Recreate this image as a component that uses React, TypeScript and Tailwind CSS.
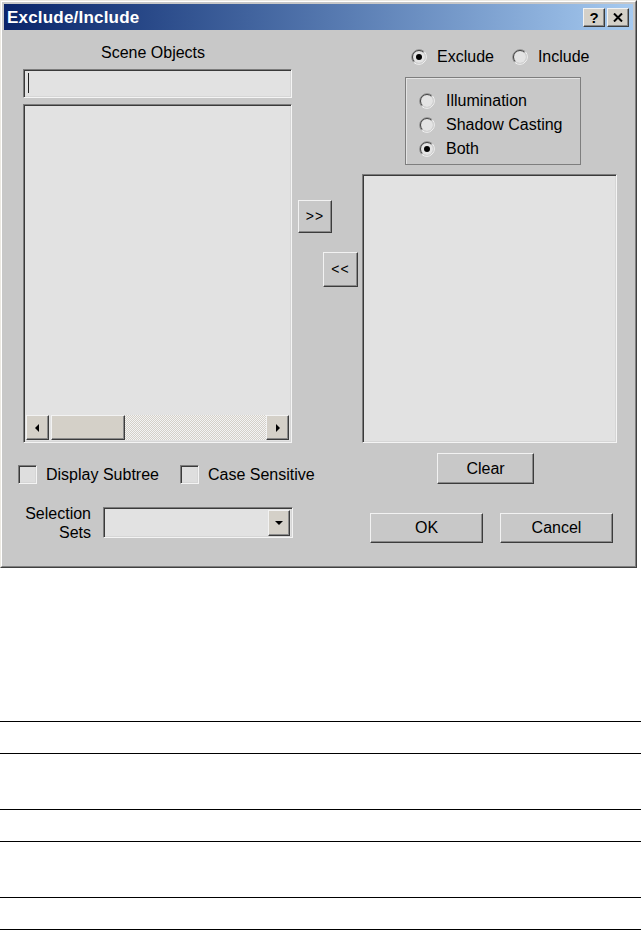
import React from 'react';

const sunken =
  'border border-t-[#7c7c7c] border-l-[#7c7c7c] border-b-[#f4f4f4] border-r-[#f4f4f4] shadow-[inset_1px_1px_0_#3a3a3a,inset_-1px_-1px_0_#d6d6d6]';
const raised =
  'border border-t-[#f2f2f2] border-l-[#f2f2f2] border-b-[#3c3c3c] border-r-[#3c3c3c] shadow-[inset_-1px_-1px_0_#8a8a8a]';

function Radio({ checked = false }: { checked?: boolean }) {
  return (
    <svg width="16" height="16" viewBox="0 0 16 16" className="shrink-0">
      <circle cx="8" cy="8" r="6" fill="#e4e4e4" />
      <path d="M2.7 13.3 A7.5 7.5 0 0 1 13.3 2.7" fill="none" stroke="#8a8a8a" strokeWidth="1" />
      <path d="M13.3 2.7 A7.5 7.5 0 0 1 2.7 13.3" fill="none" stroke="#f4f4f4" strokeWidth="1" />
      <path d="M3.4 12.6 A6.5 6.5 0 0 1 12.6 3.4" fill="none" stroke="#444444" strokeWidth="1" />
      <path d="M12.6 3.4 A6.5 6.5 0 0 1 3.4 12.6" fill="none" stroke="#d2d2d2" strokeWidth="1" />
      {checked && <circle cx="8" cy="8" r="3" fill="#000000" />}
    </svg>
  );
}

function Check({ label }: { label: string }) {
  return (
    <div className="flex items-center gap-[9px] shrink-0 whitespace-nowrap">
      <div className={`w-[19px] h-[19px] shrink-0 bg-[#dedede] ${sunken}`} />
      <span>{label}</span>
    </div>
  );
}

function Arrow({ dir }: { dir: 'left' | 'right' | 'down' }) {
  const d =
    dir === 'left' ? 'M6 1 L2 5 L6 9 Z' : dir === 'right' ? 'M3 1 L7 5 L3 9 Z' : 'M1 3 L9 3 L5 7 Z';
  return (
    <svg width="10" height="10" viewBox="0 0 10 10">
      <path d={d} fill="#000000" />
    </svg>
  );
}

function Button({ children, className }: { children: React.ReactNode; className: string }) {
  return (
    <div className={`flex items-center justify-center bg-[#c8c8c8] ${raised} ${className}`}>{children}</div>
  );
}

function Dialog() {
  return (
    <div className="w-[637px] h-[568px] border border-t-[#ece9e2] border-l-[#ece9e2] border-b-[#404040] border-r-[#404040]">
      <div className="h-full flex flex-col bg-[#c8c8c8] border border-t-[#ffffff] border-l-[#ffffff] border-b-[#808080] border-r-[#808080] p-[2px]">
        {/* Title bar */}
        <div className="h-[26px] flex items-center justify-between bg-linear-to-r from-[#0a246a] to-[#a6caf0] pl-[3px] pr-[4px]">
          <span className="text-white font-bold text-[17px] leading-none tracking-[0.2px]">Exclude/Include</span>
          <div className="flex gap-[2px]">
            <div className={`w-[22px] h-[19px] flex items-center justify-center bg-[#d4d0c8] ${raised} font-bold text-[15px] leading-none`}>?</div>
            <div className={`w-[22px] h-[19px] flex items-center justify-center bg-[#d4d0c8] ${raised}`}>
              <svg width="10" height="9" viewBox="0 0 10 9">
                <path d="M1 0.5 L9 8.5 M9 0.5 L1 8.5" stroke="#000000" strokeWidth="2" />
              </svg>
            </div>
          </div>
        </div>

        {/* Body */}
        <div className="flex-1 flex pl-[14px] text-[16px] text-black">
          {/* Left column */}
          <div className="w-[275px] shrink-0 flex flex-col">
            <div className="mt-[14px] h-[18px] leading-[18px] ml-[5px] w-[269px] pr-[9px] text-center">Scene Objects</div>
            <div className={`mt-[7px] ml-[5px] w-[269px] h-[29px] bg-[#e2e2e2] ${sunken} flex`}>
              <div className="ml-[4px] mt-[3px] w-[1px] h-[20px] bg-[#222222]" />
            </div>
            <div className={`mt-[6px] ml-[5px] w-[269px] h-[339px] bg-[#e2e2e2] ${sunken} flex flex-col justify-end p-[2px]`}>
              <div className="h-[25px] flex">
                <div className={`w-[23px] h-full flex items-center justify-center bg-[#d4d0c8] ${raised}`}>
                  <Arrow dir="left" />
                </div>
                <div className={`ml-[2px] w-[74px] h-full bg-[#d4d0c8] ${raised}`} />
                <div className="flex-1 h-full bg-[repeating-conic-gradient(#d4d0c8_0_25%,#f4f4f4_0_50%)] bg-[length:2px_2px]" />
                <div className={`w-[23px] h-full flex items-center justify-center bg-[#d4d0c8] ${raised}`}>
                  <Arrow dir="right" />
                </div>
              </div>
            </div>
            <div className="mt-[22px] h-[19px] flex items-center gap-[21px]">
              <Check label="Display Subtree" />
              <Check label="Case Sensitive" />
            </div>
            <div className="mt-[20px] flex">
              <div className="w-[73px] text-right leading-[19px]">
                Selection
                <br />
                Sets
              </div>
              <div className={`ml-[12px] mt-[3px] w-[190px] h-[31px] bg-[#e2e2e2] ${sunken} flex justify-end items-center pr-[2px]`}>
                <div className={`w-[22px] h-[26px] flex items-center justify-center bg-[#d4d0c8] ${raised}`}>
                  <Arrow dir="down" />
                </div>
              </div>
            </div>
          </div>

          {/* Middle column */}
          <div className="w-[69px] shrink-0 flex flex-col">
            <Button className="mt-[170px] ml-[5px] w-[34px] h-[33px] text-[14px] tracking-[1px]">&gt;&gt;</Button>
            <Button className="mt-[19px] ml-[30px] w-[35px] h-[35px] text-[14px] tracking-[1px]">&lt;&lt;</Button>
          </div>

          {/* Right column */}
          <div className="w-[255px] shrink-0 flex flex-col">
            <div className="mt-[18px] h-[18px] ml-[49px] flex items-center">
              <Radio checked />
              <span className="ml-[10px]">Exclude</span>
              <span className="ml-[18px]" />
              <Radio />
              <span className="ml-[10px]">Include</span>
            </div>
            <div className="mt-[11px] ml-[43px] w-[176px] h-[88px] border border-[#7e7e7e] shadow-[inset_1px_1px_0_#e4e4e4] pt-[11px] pl-[13px]">
              {[
                { label: 'Illumination', checked: false },
                { label: 'Shadow Casting', checked: false },
                { label: 'Both', checked: true },
              ].map((r) => (
                <div key={r.label} className="h-[24px] flex items-center gap-[11px]">
                  <Radio checked={r.checked} />
                  <span>{r.label}</span>
                </div>
              ))}
            </div>
            <div className={`mt-[9px] w-[255px] h-[269px] bg-[#e2e2e2] ${sunken}`} />
            <Button className="mt-[10px] ml-[75px] w-[97px] h-[31px]">Clear</Button>
            <div className="mt-[29px] ml-[8px] flex gap-[17px]">
              <Button className="w-[113px] h-[30px]">OK</Button>
              <Button className="w-[113px] h-[30px]">Cancel</Button>
            </div>
          </div>
        </div>
      </div>
    </div>
  );
}

export default function App() {
  return (
    <div className="w-full h-[930px] overflow-hidden bg-white font-['Liberation_Sans',Arial,sans-serif]">
      <Dialog />
      <div className="mt-[153px]">
        <div className="h-[32px] border-t border-black" />
        <div className="h-[56px] border-t border-black" />
        <div className="h-[32px] border-t border-black" />
        <div className="h-[56px] border-t border-black" />
        <div className="h-[32px] border-t border-black" />
        <div className="h-[1px] border-t border-black" />
      </div>
    </div>
  );
}
